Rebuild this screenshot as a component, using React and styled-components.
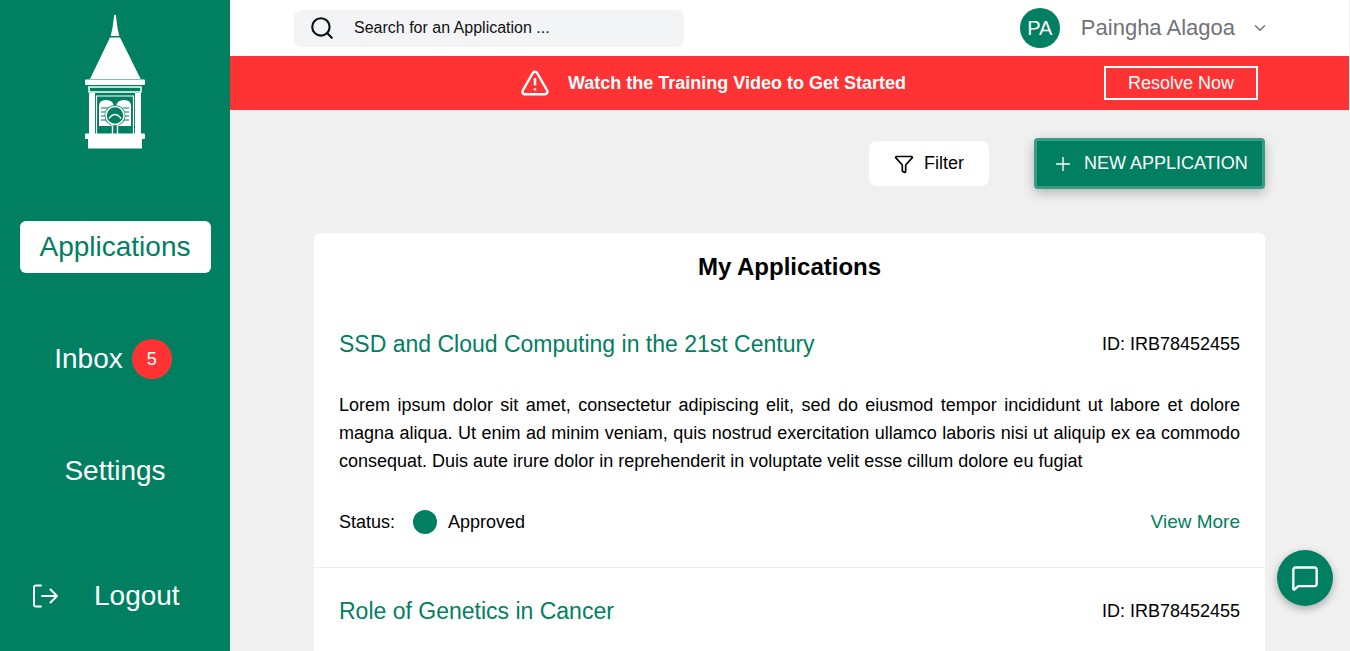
import React from 'react'
import styled, { createGlobalStyle } from 'styled-components'
import { ChevronDown, Filter, MessageSquare, Plus, Search, TriangleAlert } from 'lucide-react'

const green = '#008060'
const red = '#ff3333'

const GlobalStyle = createGlobalStyle`
  html, body {
    margin: 0;
    height: 100%;
    overflow: hidden;
    font-family: 'Liberation Sans', Arial, sans-serif;
    color: #000;
  }
  * {
    box-sizing: border-box;
  }
`
const Page = styled.div`
  display: flex;
  height: 651px;
  overflow: hidden;
  padding-right: 1px;
  background: #f0f0f0;
`
const Sidebar = styled.aside`
  flex: 0 0 230px;
  display: flex;
  flex-direction: column;
  align-items: center;
  padding-top: 15px;
  background: ${green};
`
const Logo = styled.svg`
  display: block;
  width: 110px;
  height: 136px;
  margin-bottom: 70px;
`
const Nav = styled.nav`
  display: flex;
  flex-direction: column;
  align-items: center;
  gap: 60px;
`
const NavItem = styled.a`
  display: flex;
  align-items: center;
  justify-content: center;
  gap: 9px;
  width: 191px;
  height: 52px;
  border-radius: 6px;
  font-size: 28px;
  background: ${props => (props.$active ? '#fff' : 'transparent')};
  color: ${props => (props.$active ? green : '#fff')};
`
const Badge = styled.span`
  display: flex;
  align-items: center;
  justify-content: center;
  width: 40px;
  height: 40px;
  margin-right: 4px;
  border-radius: 50%;
  background: ${red};
  font-size: 18px;
  font-weight: 400;
  color: #fff;
`
const Logout = styled.a`
  display: flex;
  align-items: center;
  align-self: stretch;
  height: 52px;
  margin-top: 73px;
  padding-left: 32px;
  font-size: 28px;
  color: #fff;
  svg {
    margin-right: 36px;
  }
`
const Main = styled.div`
  flex: 1;
  min-width: 0;
  display: flex;
  flex-direction: column;
`
const TopBar = styled.header`
  flex: 0 0 56px;
  display: flex;
  align-items: center;
  justify-content: space-between;
  padding: 0 80px 0 64px;
  background: #fff;
`
const SearchBox = styled.div`
  display: flex;
  align-items: center;
  gap: 19px;
  width: 390px;
  height: 37px;
  padding-left: 15px;
  border-radius: 8px;
  background: #f3f4f6;
  font-size: 16px;
  color: #111;
`
const Account = styled.div`
  display: flex;
  align-items: center;
  color: #6f7276;
  font-size: 22px;
`
const Avatar = styled.span`
  display: flex;
  align-items: center;
  justify-content: center;
  width: 40px;
  height: 40px;
  margin-right: 21px;
  border-radius: 50%;
  background: ${green};
  color: #fff;
  font-size: 20px;
`
const AccountName = styled.span`
  margin-right: 16px;
`
const Alert = styled.div`
  flex: 0 0 54px;
  position: relative;
  display: flex;
  align-items: center;
  justify-content: flex-end;
  padding-right: 91px;
  background: ${red};
  color: #fff;
`
const AlertText = styled.strong`
  display: flex;
  align-items: center;
  gap: 18px;
  margin-right: 198px;
  font-size: 18px;
`
const ResolveButton = styled.button`
  width: 154px;
  height: 34px;
  padding: 0;
  border: 2px solid #fff;
  background: transparent;
  color: #fff;
  font: 18px 'Liberation Sans', Arial, sans-serif;
`
const Content = styled.main`
  flex: 1;
  min-height: 0;
  padding: 28px 84px 0 84px;
`
const Actions = styled.div`
  display: flex;
  align-items: center;
  justify-content: flex-end;
  gap: 45px;
  margin-bottom: 44px;
`
const FilterButton = styled.button`
  display: flex;
  align-items: center;
  justify-content: center;
  gap: 10px;
  width: 120px;
  height: 45px;
  border: 0;
  border-radius: 8px;
  background: #fff;
  color: #000;
  font: 18px 'Liberation Sans', Arial, sans-serif;
`
const NewButton = styled.button`
  display: flex;
  align-items: center;
  gap: 10px;
  width: 231px;
  height: 51px;
  padding: 0 0 0 15px;
  border: 3px solid #3a9a82;
  border-radius: 4px;
  background: ${green};
  box-shadow: 0 4px 12px rgba(0, 0, 0, 0.25);
  color: #fff;
  font: 18px 'Liberation Sans', Arial, sans-serif;
  white-space: nowrap;
`
const Card = styled.section`
  border-radius: 6px 6px 0 0;
  background: #fff;
`
const CardTitle = styled.h1`
  margin: 0;
  padding-top: 20px;
  font-size: 24px;
  line-height: 28px;
  text-align: center;
`
const Item = styled.article`
  padding: ${props => (props.$first ? '47px' : '27px')} 25px 33px;
  border-bottom: 1px solid #eeeeee;
`
const ItemHead = styled.div`
  display: flex;
  align-items: center;
  justify-content: space-between;
  height: 32px;
  margin-bottom: 31px;
`
const ItemTitle = styled.h2`
  margin: 0;
  font-size: 23px;
  font-weight: 400;
  color: ${green};
`
const ItemId = styled.span`
  font-size: 18px;
`
const Summary = styled.p`
  margin: 0 0 35px;
  font-size: 18px;
  line-height: 28px;
  text-align: justify;
`
const ItemFoot = styled.div`
  display: flex;
  align-items: center;
  height: 24px;
  font-size: 18px;
`
const StatusDot = styled.span`
  width: 24px;
  height: 24px;
  margin: 0 11px 0 18px;
  border-radius: 50%;
  background: ${green};
`
const ViewMore = styled.a`
  margin-left: auto;
  font-size: 19px;
  color: ${green};
`
const ChatButton = styled.button`
  position: fixed;
  right: 17px;
  bottom: 45px;
  display: flex;
  align-items: center;
  justify-content: center;
  width: 56px;
  height: 56px;
  padding: 0;
  border: 0;
  border-radius: 50%;
  background: ${green};
  box-shadow: 0 3px 8px rgba(0, 0, 0, 0.3);
  color: #fff;
`

const TowerLogo = () => (
  <Logo viewBox='0 15 110 136' fill='#fff'>
    <path d='M54.2 15 H55.8 L57.5 28 L59.3 36 H50.7 L52.5 28 Z' />
    <path d='M50 37.5 H60 L80.7 79 H30 Z' />
    <rect x='25' y='79.5' width='60' height='5.5' rx='1' />
    <rect x='29' y='87' width='52' height='5' fill='none' stroke='#fff' strokeWidth='1.5' />
    <rect x='29' y='93' width='6' height='41' />
    <rect x='75' y='93' width='6' height='41' />
    <path d='M36.5 134 V96 H73.5 V134' fill='none' stroke='#fff' strokeWidth='1.2' />
    <path d='M39 126 V106 Q39 100 46 100 Q53 100 54 106 V126 Z' />
    <path d='M56 126 V106 Q57 100 64 100 Q71 100 71 106 V126 Z' />
    <g stroke={green} strokeWidth='1'>
      <path d='M41 108 H49 M41 112 H47 M41 116 H46 M41 120 H49' />
      <path d='M63 108 H69 M64 112 H69 M64 116 H69 M61 120 H69' />
    </g>
    <circle cx='55' cy='115.5' r='10.5' fill={green} />
    <circle cx='55' cy='115.5' r='9' fill='none' stroke='#fff' strokeWidth='1.6' />
    <path d='M49 118.5 Q55 110.5 61 118.5' fill='none' stroke='#fff' strokeWidth='1.4' />
    <path d='M52.5 126 V134 M57.5 126 V134' stroke='#fff' strokeWidth='1.4' />
    <rect x='25' y='133.5' width='60' height='5.5' rx='1' />
    <rect x='28' y='139' width='54' height='9.5' />
  </Logo>
)

const LogoutIcon = () => (
  <svg width='26' height='24' viewBox='0 0 26 24' fill='none' stroke='#fff' strokeWidth='2' strokeLinecap='round' strokeLinejoin='round'>
    <path d='M9 1.5 H4 Q2 1.5 2 3.5 V20.5 Q2 22.5 4 22.5 H9' />
    <path d='M10 12 H25 M18.5 5.5 L25 12 L18.5 18.5' />
  </svg>
)

const summary = 'Lorem ipsum dolor sit amet, consectetur adipiscing elit, sed do eiusmod tempor incididunt ut labore et dolore magna aliqua. Ut enim ad minim veniam, quis nostrud exercitation ullamco laboris nisi ut aliquip ex ea commodo consequat. Duis aute irure dolor in reprehenderit in voluptate velit esse cillum dolore eu fugiat'

// the second row runs past the bottom of the window, only its head shows
const applications = [
  { title: 'SSD and Cloud Computing in the 21st Century', id: 'IRB78452455', status: 'Approved', summary },
  { title: 'Role of Genetics in Cancer', id: 'IRB78452455' }
]

export default function App () {
  return (
    <Page>
      <GlobalStyle />
      <Sidebar>
        <TowerLogo />
        <Nav>
          <NavItem $active>Applications</NavItem>
          <NavItem>Inbox<Badge>5</Badge></NavItem>
          <NavItem>Settings</NavItem>
        </Nav>
        <Logout><LogoutIcon />Logout</Logout>
      </Sidebar>
      <Main>
        <TopBar>
          <SearchBox>
            <Search size={26} color='#111' />
            Search for an Application ...
          </SearchBox>
          <Account>
            <Avatar>PA</Avatar>
            <AccountName>Paingha Alagoa</AccountName>
            <ChevronDown size={18} />
          </Account>
        </TopBar>
        <Alert>
          <AlertText>
            <TriangleAlert size={30} />
            Watch the Training Video to Get Started
          </AlertText>
          <ResolveButton>Resolve Now</ResolveButton>
        </Alert>
        <Content>
          <Actions>
            <FilterButton><Filter size={20} />Filter</FilterButton>
            <NewButton><Plus size={22} strokeWidth={1.5} />NEW APPLICATION</NewButton>
          </Actions>
          <Card>
            <CardTitle>My Applications</CardTitle>
            {applications.map((app, index) => (
              <Item key={app.title} $first={index === 0}>
                <ItemHead>
                  <ItemTitle>{app.title}</ItemTitle>
                  <ItemId>ID: {app.id}</ItemId>
                </ItemHead>
                {app.summary && (
                  <>
                    <Summary>{app.summary}</Summary>
                    <ItemFoot>
                      Status:
                      <StatusDot />
                      {app.status}
                      <ViewMore>View More</ViewMore>
                    </ItemFoot>
                  </>
                )}
              </Item>
            ))}
          </Card>
        </Content>
      </Main>
      <ChatButton><MessageSquare size={28} strokeWidth={2} /></ChatButton>
    </Page>
  )
}
